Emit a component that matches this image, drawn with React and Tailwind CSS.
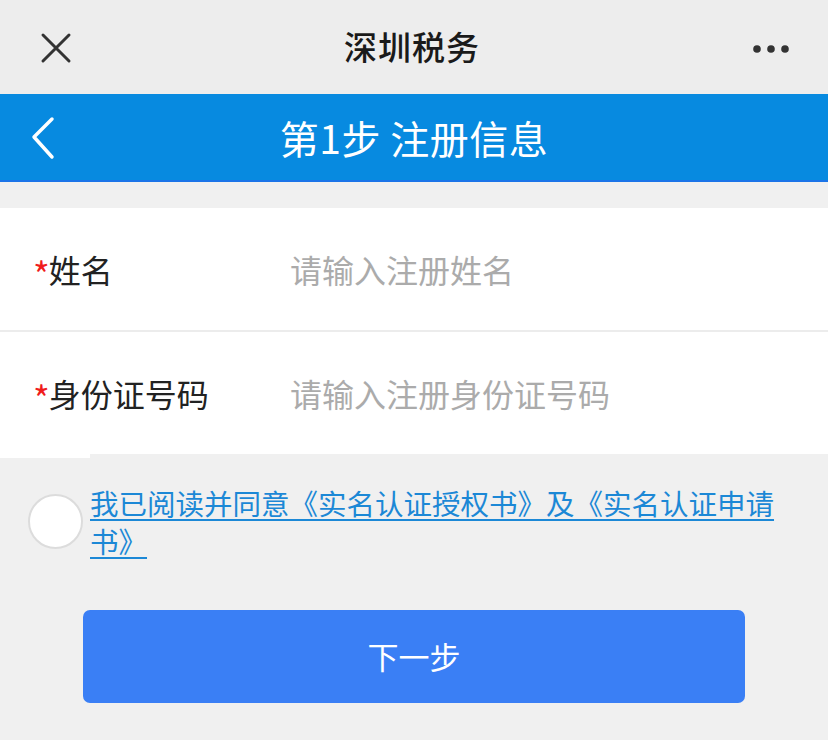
import { useState } from "react";

function CloseIcon() {
  return (
    <svg width="32" height="32" viewBox="0 0 32 32" fill="none">
      <path d="M3 3L29 29M29 3L3 29" stroke="#333" strokeWidth="3" strokeLinecap="round" />
    </svg>
  );
}

function MoreIcon() {
  return (
    <svg width="40" height="10" viewBox="0 0 40 10" fill="#333">
      <circle cx="5" cy="5" r="3.8" />
      <circle cx="19" cy="5" r="3.8" />
      <circle cx="33" cy="5" r="3.8" />
    </svg>
  );
}

function BackIcon() {
  return (
    <svg width="28" height="44" viewBox="0 0 28 44" fill="none">
      <path d="M22 3L4 21L22 41" stroke="#fff" strokeWidth="3.5" strokeLinecap="round" strokeLinejoin="round" />
    </svg>
  );
}

function Field({ label, placeholder, value, onChange }) {
  return (
    <div className="flex items-center h-[122px] bg-white pl-[33px]">
      <div className="w-[257px] shrink-0 flex items-center text-[32px] text-[#222]">
        <span className="text-[#f01c1c] text-[36px] leading-none mt-[8px] -mr-[1px]">*</span>
        <span>{label}</span>
      </div>
      <input
        className="flex-1 min-w-0 bg-transparent outline-none text-[32px] text-[#222] placeholder:text-[#ababab]"
        placeholder={placeholder}
        value={value}
        onChange={(e) => onChange(e.target.value)}
      />
    </div>
  );
}

export default function App() {
  const [name, setName] = useState("");
  const [idNo, setIdNo] = useState("");
  const [agreed, setAgreed] = useState(false);

  return (
    <div
      className="w-[828px] h-[740px] bg-[#f0f0f0] overflow-hidden"
      style={{ fontFamily: '"Noto Sans CJK SC", "Noto Sans", sans-serif' }}
    >
      {/* top bar */}
      <div className="h-[94px] bg-[#ededed] flex items-center justify-between px-[40px]">
        <button className="w-[32px] h-[32px] flex items-center justify-center mt-[2px]">
          <CloseIcon />
        </button>
        <div className="text-[33px] font-medium text-[#1a1a1a] tracking-[1px]">深圳税务</div>
        <button className="w-[40px] flex items-center justify-center -mr-[4px] mt-[4px]">
          <MoreIcon />
        </button>
      </div>

      {/* blue header */}
      <div className="h-[88px] bg-[#078ae0] border-b-2 border-[#1b74e8] relative flex items-center justify-center">
        <button className="absolute left-[30px] top-[22px]">
          <BackIcon />
        </button>
        <div className="text-[39px] text-white tracking-[0.5px]">第1步 注册信息</div>
      </div>

      <div className="h-[26px]" />

      {/* form */}
      <div className="flex flex-col">
        <Field label="姓名" placeholder="请输入注册姓名" value={name} onChange={setName} />
        <div className="h-[2px] bg-[#ececec]" />
        <Field label="身份证号码" placeholder="请输入注册身份证号码" value={idNo} onChange={setIdNo} />
      </div>
      <div className="h-[4px] w-[90px] bg-white" />

      {/* agreement */}
      <div className="flex items-start pl-[28px] pr-[40px] pt-[26px]">
        <button
          onClick={() => setAgreed(!agreed)}
          className={`w-[55px] h-[55px] shrink-0 rounded-full border-2 border-[#dcdcdc] mt-[10px] ${agreed ? "bg-[#3a7ff5]" : "bg-white"}`}
        />
        <a className="ml-[7px] text-[28.5px] leading-[38px] text-[#1c88d6] underline underline-offset-[4px] decoration-[2px]">
          我已阅读并同意《实名认证授权书》及《实名认证申请书》
        </a>
      </div>

      {/* next */}
      <div className="px-[83px] pt-[50px]">
        <button className="w-full h-[93px] rounded-[7px] bg-[#3a7ff5] text-white text-[31px] flex items-center justify-center">
          下一步
        </button>
      </div>
    </div>
  );
}
